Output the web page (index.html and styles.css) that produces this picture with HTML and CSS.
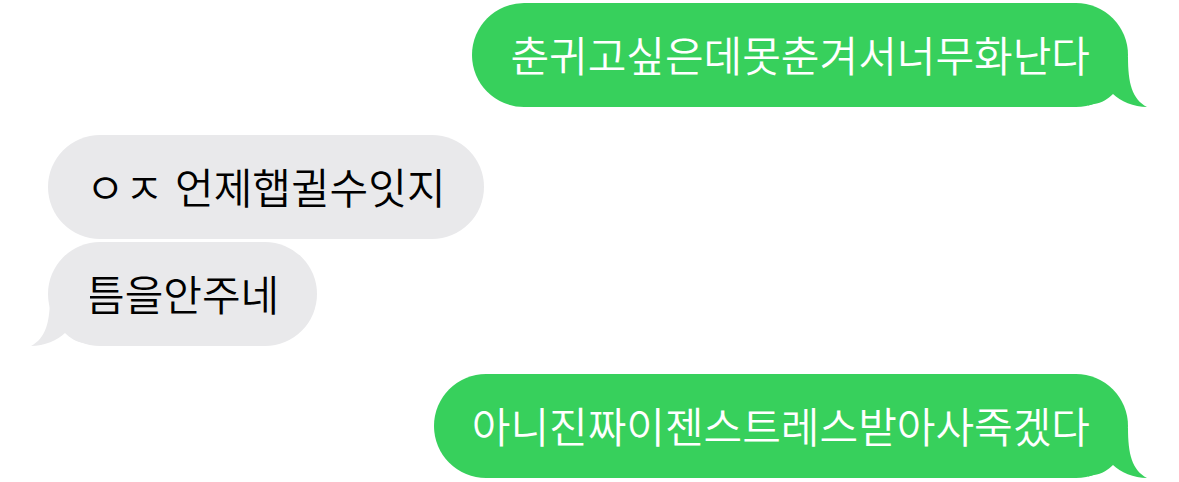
FILE: index.html
```html
<!DOCTYPE html>
<html lang="ko">
<head>
<meta charset="UTF-8">
<meta name="viewport" content="width=device-width, initial-scale=1.0">
<title>메시지</title>
<link rel="stylesheet" href="styles.css">
</head>
<body>

<div class="chat">
  <div class="bubble sent">
    춘귀고싶은데못춘겨서너무화난다
    <svg class="tail" viewBox="0 0 59 50"><path d="M0 0 H40 C40 26 44 42 59 50 C46 50 32 44 25 37 C20 42 14 46 6 47 L0 48.5 Z"/></svg>
  </div>

  <div class="bubble received first">ㅇㅈ 언제햅귈수잇지</div>
  <div class="bubble received">
    틈을안주네
    <svg class="tail" viewBox="0 0 59 50"><path d="M0 0 H40 C40 26 44 42 59 50 C46 50 32 44 25 37 C20 42 14 46 6 47 L0 48.5 Z"/></svg>
  </div>

  <div class="bubble sent first">
    아니진짜이젠스트레스받아사죽겠다
    <svg class="tail" viewBox="0 0 59 50"><path d="M0 0 H40 C40 26 44 42 59 50 C46 50 32 44 25 37 C20 42 14 46 6 47 L0 48.5 Z"/></svg>
  </div>
</div>

</body>
</html>
```

FILE: styles.css
```css
body {
  margin: 0;
  background: #fff;
  font-family: "Noto Sans CJK KR", "Noto Sans", sans-serif;
}
.chat {
  display: flex;
  flex-direction: column;
  padding: 3px 51px 0 48px;
}
.bubble {
  position: relative;
  padding: 27px 38px 29px;
  border-radius: 52px;
  font-size: 42px;
  font-weight: 350;
  line-height: 48px;
  white-space: nowrap;
}
.bubble + .bubble {
  margin-top: 3px;
}
.bubble.first {
  margin-top: 28px;
}
.sent {
  align-self: flex-end;
  background: #37d05c;
  color: #fff;
}
.received {
  align-self: flex-start;
  background: #e9e9eb;
  color: #000;
}
.tail {
  position: absolute;
  bottom: 0;
  width: 59px;
  height: 50px;
}
.sent .tail {
  right: -19px;
  fill: #37d05c;
}
.received .tail {
  left: -17px;
  fill: #e9e9eb;
  transform: scaleX(-1);
}
```
